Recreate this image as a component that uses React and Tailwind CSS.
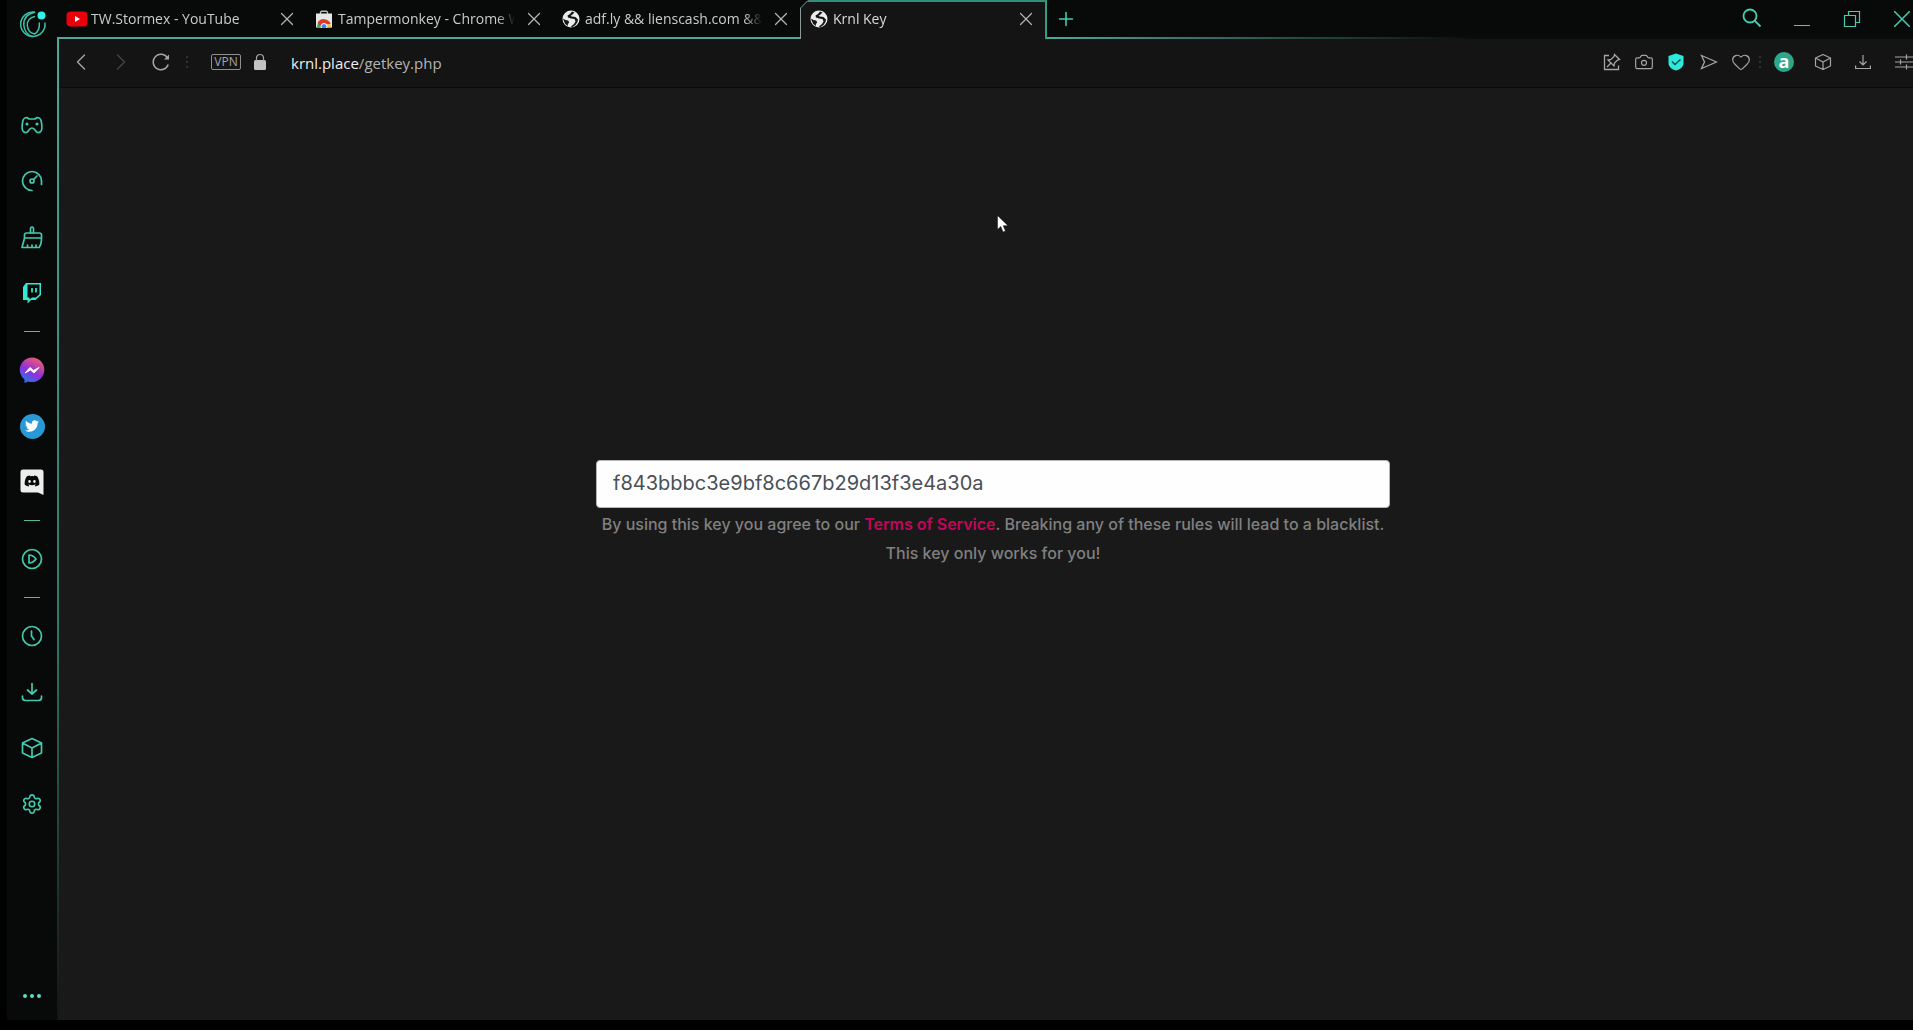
import { useState } from 'react';
import { Camera, ChevronLeft, ChevronRight, Heart, Plus, Settings, X } from 'lucide-react';
import { FaDiscord, FaTwitter } from 'react-icons/fa';

/* Favicons */
const YouTubeIcon = () => (
  <svg viewBox="0 0 22 16" className="w-[22px] h-4">
    <rect x="0.5" y="0.5" width="21" height="15" rx="4" fill="#e8000b" />
    <path d="M9 5v6l5-3z" fill="#fff" />
  </svg>
);

const StoreIcon = () => (
  <svg viewBox="0 0 18 18" className="size-[18px]">
    <path d="M5.500 4V2.500a1.200 1.200 0 0 1 1.200-1.200h4.600a1.200 1.200 0 0 1 1.200 1.200V4" fill="none" stroke="#b9bcbe" strokeWidth="1.400" />
    <rect x="1" y="3.500" width="16" height="14" fill="#e6e6e6" />
    <path d="M2 17.500a7 7 0 0 1 14 0z" fill="#f1c232" />
    <path d="M2 17.500a7 7 0 0 1 4-6.300l3 6.300z" fill="#3aa757" />
    <path d="M2.500 13a7.200 7.200 0 0 1 13.200 1H9a3 3 0 0 0-3 2z" fill="#dc3b2c" />
    <circle cx="9" cy="16.500" r="3" fill="#4285f4" stroke="#fff" strokeWidth="1" />
  </svg>
);

const GlobeIcon = () => (
  <svg viewBox="0 0 18 18" className="size-[18px]">
    <circle cx="9" cy="9" r="8.500" fill="#ececec" />
    <path d="M10 1.500 8 4 5.500 5.500l.5 2L9 8.500l3.500.5 1 2.500-1.500 2.500-2.500 2-.5 1h1.500l3-2 2-3 .5-2.500-2.500-2.500L10 6.500 8.500 6l2-1.500 2-2z" fill="#17181a" />
    <path d="M.8 8.500 3.500 10l2.700.6 1 1.900-1.400 1.600.2 2-2.800-2z" fill="#17181a" />
  </svg>
);

/* Sidebar drawings */
const stroke = { fill: 'none', stroke: 'currentColor', strokeWidth: 1.7, strokeLinecap: 'round', strokeLinejoin: 'round' };

const Logo = () => (
  <svg viewBox="0 0 28 28" className="size-7" fill="none" stroke="#3fbfa6" strokeWidth="1.500" strokeLinecap="round">
    <path d="M15.500 2.200A12.200 12.200 0 1 0 26 13" />
    <path d="M15.500 2.200C8 4 4.500 9 4.800 15S9 25.500 13.500 26.500" />
    <path d="M15.500 6.500C10 8 8 11.500 8.300 15.500s3 7.500 7.200 8.500c3.500-2 5.200-6 4.800-11" />
    <circle cx="22.500" cy="5.500" r="4" fill="#2ff3e4" stroke="none" />
  </svg>
);

const Gamepad = () => (
  <svg viewBox="0 0 22 20" className="w-[22px] h-5" {...stroke}>
    <path d="M6 2.500 8 4h6l2-1.500c2.500 0 3.800 1.500 4.300 4 .4 2 .8 4.500.5 7.500-.3 2.500-2.500 4.500-4.800 3.300-1.700-.9-2-4.300-5-4.300s-3.300 3.400-5 4.300C3.700 18.500 1.500 16.500 1.200 14c-.3-3 .1-5.500.5-7.500.5-2.500 1.800-4 4.300-4z" />
    <circle cx="6" cy="9" r=".7" fill="currentColor" />
    <circle cx="16" cy="9" r=".7" fill="currentColor" />
  </svg>
);

const Gauge = () => (
  <svg viewBox="0 0 22 22" className="size-[22px]" {...stroke}>
    <path d="M11 20.500A9.500 9.500 0 1 1 20.500 11v3.500" />
    <circle cx="11" cy="11" r="2" />
    <path d="m12.500 9.500 3.500-3.500" />
  </svg>
);

const Broom = () => (
  <svg viewBox="0 0 22 24" className="w-[22px] h-6" {...stroke}>
    <path d="M9.500 8V4q0-2 1.500-2t1.500 2v4" />
    <path d="M5.500 8h13q2 0 2 2v3h-17v-3q0-2 2-2zM3.500 13 1 22.500h17q2.500-3 2.500-9.500M6.500 22v-2M11 22v-2M15 22v-2" />
  </svg>
);

const Twitch = () => (
  <svg viewBox="0 0 20 22" className="w-5 h-[22px]">
    <path d="M4 1 1 5v13h4.500v3.500L9 18h4.500l5.500-5V1z" fill="#35e8d3" />
    <path d="M5.500 2.500h12v9.700L14 15.500h-4l-2.500 2v-2h-2z" fill="#090b0b" />
    <path d="M10 6v4.500M14 6v4.500" stroke="#35e8d3" strokeWidth="1.700" />
  </svg>
);

const Messenger = () => (
  <svg viewBox="0 0 26 26" className="size-[26px]">
    <defs>
      <linearGradient id="messenger" x1="0.2" y1="1" x2="0.75" y2="0">
        <stop offset="0" stopColor="#1583e8" />
        <stop offset="0.45" stopColor="#922ddd" />
        <stop offset="1" stopColor="#f0606a" />
      </linearGradient>
    </defs>
    <path d="M13 .5a12.300 12.300 0 0 1 0 24.600c-1.500 0-2.800-.2-4-.6L5.500 26v-3.500A12.300 12.300 0 0 1 13 .5z" fill="url(#messenger)" />
    <path d="m6 16 5-5.500 3.500 3 5.500-3-5 5.500-3.500-3z" fill="#fff" stroke="#fff" strokeWidth="1" strokeLinejoin="round" />
  </svg>
);

const Twitter = () => (
  <span className="flex size-[25px] items-center justify-center rounded-full bg-[#2898d6] text-white">
    <FaTwitter size={14} />
  </span>
);

const Discord = () => (
  <svg viewBox="0 0 24 26" className="w-6 h-[26px]">
    <path d="M3 .5h18A2.500 2.500 0 0 1 23.500 3v23L18 23.500H3A2.500 2.500 0 0 1 .5 21V3A2.500 2.500 0 0 1 3 .5z" fill="#ededed" />
    <FaDiscord x="4" y="4" size={16} color="#090b0b" />
  </svg>
);

const Player = () => (
  <svg viewBox="0 0 22 22" className="size-[22px]" {...stroke}>
    <circle cx="11" cy="11" r="9.500" />
    <path d="M8 7v8q4 0 7-4-3-4-7-4z" />
  </svg>
);

const History = () => (
  <svg viewBox="0 0 22 22" className="size-[22px]" {...stroke}>
    <circle cx="11" cy="11" r="9.500" />
    <path d="M10.500 6v5l2.500 3.500" />
  </svg>
);

const Downloads = () => (
  <svg viewBox="0 0 22 20" className="w-[22px] h-5" {...stroke}>
    <path d="M11 1.500v10M6.500 8l4.500 4L15.500 8M1.500 14v1.500q0 3 3 3h13q3 0 3-3V14" />
  </svg>
);

const Extensions = () => (
  <svg viewBox="0 0 22 22" className="size-[22px]" {...stroke}>
    <path d="M11 1.500 20.500 6v10L11 20.500 1.500 16V6zM1.500 6 11 11l9.500-5M11 11v9.500" />
  </svg>
);

const Preferences = () => <Settings size={22} strokeWidth={1.8} />;

const sidebar = [
  { name: 'GX Corner', icon: Gamepad },
  { name: 'GX Control', icon: Gauge },
  { name: 'GX Cleaner', icon: Broom },
  { name: 'Twitch', icon: Twitch },
  null,
  { name: 'Messenger', icon: Messenger },
  { name: 'Twitter', icon: Twitter },
  { name: 'Discord', icon: Discord },
  null,
  { name: 'Player', icon: Player },
  null,
  { name: 'History', icon: History },
  { name: 'Downloads', icon: Downloads },
  { name: 'Extensions', icon: Extensions },
  { name: 'Settings', icon: Preferences },
];

const tabs = [
  { title: 'TW.Stormex - YouTube', icon: YouTubeIcon },
  { title: 'Tampermonkey - Chrome W', icon: StoreIcon },
  { title: 'adf.ly && lienscash.com &&', icon: GlobeIcon },
  { title: 'Krnl Key', icon: GlobeIcon, active: true },
];

function Sidebar() {
  return (
    <nav className="flex w-[50px] shrink-0 flex-col items-center bg-[#080909] text-[#43c9ad]">
      <button aria-label="Menu" className="flex h-[97px] w-full justify-center pt-[10px] pl-0.5"><Logo /></button>
      {sidebar.map((item, i) =>
        item ? (
          <button key={i} aria-label={item.name} className="flex h-14 w-full items-center justify-center">
            <item.icon />
          </button>
        ) : (
          <div key={i} className="flex h-[21px] items-center">
            <div className="h-px w-4 bg-[#5cb5a0]"></div>
          </div>
        )
      )}
      <button aria-label="More" className="mt-auto flex h-12 w-full items-center justify-center gap-[3px]">
        <span className="size-1 rounded-full bg-[#5fdcc1]"></span>
        <span className="size-1 rounded-full bg-[#5fdcc1]"></span>
        <span className="size-1 rounded-full bg-[#5fdcc1]"></span>
      </button>
    </nav>
  );
}

function Tab({ title, icon: Icon, active }) {
  return (
    <div
      className={`relative flex w-[247px] shrink-0 items-center ${
        active
          ? 'border-t-2 border-r-2 border-l border-t-[#2f8f7c] border-r-[#349b87] border-l-[#8d9a97] bg-[#141414] pb-1 text-[#dadada]'
          : 'border-b-2 border-[#4fa897]'
      }`}
    >
      {/* Cut corner of the active tab */}
      {active && (
        <svg viewBox="0 0 9 9" className="absolute -top-0.5 -left-px size-[9px]">
          <path d="M0 0h9L0 9z" fill="#080909" />
          <path d="M.5 9V8L7.500 1H9" fill="none" stroke="#7d9d96" />
        </svg>
      )}
      <button className="flex min-w-0 flex-1 items-center gap-[3px] pl-[7px] text-left">
        <span className="flex w-[22px] shrink-0 justify-center"><Icon /></span>
        <span className="min-w-0 flex-1 whitespace-nowrap mask-r-from-90%">{title}</span>
      </button>
      <button aria-label="Close tab" className="flex w-[38px] shrink-0 justify-center text-[#b4b4b4]">
        <X size={22} strokeWidth={1.3} />
      </button>
    </div>
  );
}

function TabBar() {
  return (
    <div className="flex h-[39px] shrink-0 bg-[#080909] text-[14px] text-[#cbcbcb]">
      {tabs.map(tab => <Tab key={tab.title} {...tab} />)}
      <div className="flex flex-1 flex-col">
        <div className="flex flex-1 text-[#45cdb2]">
          <button aria-label="New tab" className="flex w-[38px] items-center justify-center"><Plus size={22} strokeWidth={1.7} /></button>
          <div className="ml-auto flex">
            <button aria-label="Search tabs" className="flex w-[50px] items-center justify-center pb-0.5">
              <svg viewBox="0 0 20 20" className="size-5" fill="none" stroke="currentColor" strokeWidth="1.800">
                <circle cx="8" cy="8" r="6.500" />
                <path d="m12.500 12.500 6 6" />
              </svg>
            </button>
            <button aria-label="Minimize" className="flex w-[50px] items-end justify-center pb-[11px]"><span className="h-px w-4 bg-current"></span></button>
            <button aria-label="Restore" className="flex w-[50px] items-center justify-center">
              <svg viewBox="0 0 18 18" className="size-[18px]" fill="none" stroke="currentColor" strokeWidth="1.200">
                <path d="M1.500 5.500h11v11h-11zM5.500 5.500v-4h11v11h-4" />
              </svg>
            </button>
            <button aria-label="Close" className="flex w-9 items-center justify-end pr-[3px]">
              <svg viewBox="0 0 16 16" className="size-4" stroke="currentColor" strokeWidth="1.500"><path d="m0 0 16 16M16 0 0 16" /></svg>
            </button>
          </div>
        </div>
        <div className="h-0.5 bg-linear-to-r from-[#4fa897] to-transparent to-50%"></div>
      </div>
    </div>
  );
}

const Dots = () => (
  <span className="flex w-[6px] flex-col items-center gap-[3px]">
    <span className="size-0.5 bg-[#303131]"></span>
    <span className="size-0.5 bg-[#303131]"></span>
    <span className="size-0.5 bg-[#303131]"></span>
  </span>
);

function AddressBar() {
  const [url] = useState('krnl.place/getkey.php');
  const [host, path] = url.split('/');

  return (
    <div className="flex h-[49px] shrink-0 items-center border-b border-[#0b0b0b] bg-[#141414] pb-0.5 text-[#a5a5a5]">
      <button aria-label="Back" className="flex w-10 justify-center pl-1"><ChevronLeft size={28} strokeWidth={1.2} /></button>
      <button aria-label="Forward" className="flex w-10 justify-center pl-1 text-[#454545]"><ChevronRight size={28} strokeWidth={1.2} /></button>
      <button aria-label="Reload" className="flex w-10 justify-center pl-1">
        <svg viewBox="0 0 18 18" className="size-[18px]" fill="none" stroke="currentColor" strokeWidth="1.500">
          <path d="M16.200 11.500A7.700 7.700 0 1 1 15.500 5" />
          <path d="M17 1.500V6.500h-5z" fill="currentColor" stroke="none" />
        </svg>
      </button>
      <span className="ml-[5px]"><Dots /></span>
      <button className="ml-[21px] flex h-4 w-[30px] items-center justify-center rounded-xs border border-[#8f8f8f] text-[12px] leading-none">VPN</button>
      <svg viewBox="0 0 14 18" className="ml-3 h-[18px] w-[14px]">
        <rect x="1" y="7" width="12" height="10" rx="1.500" fill="#c2c2c2" />
        <path d="M3.500 8V5a3.500 3.500 0 0 1 7 0v3" fill="none" stroke="#a5a5a5" strokeWidth="1.200" />
      </svg>
      <div className="ml-6 pt-0.5 text-[15px] text-[#b3b3b3]">
        <span className="text-[#eeeeee]">{host}</span>/{path}
      </div>

      <div className="ml-auto flex items-center">
        <button aria-label="Pinboard" className="flex w-[33px] justify-center">
          <svg viewBox="0 0 18 18" className="size-[18px]" fill="none" stroke="currentColor" strokeWidth="1.300">
            <path d="M6 2.500H1.500v14h14V12.500M11.500 1.500l5 5-2 .5-3 3-.5 3-6-6 3-.5 3-3zM8 10l-4 4" />
          </svg>
        </button>
        <button aria-label="Snapshot" className="flex w-8 justify-center"><Camera size={20} strokeWidth={1.4} /></button>
        <button aria-label="Ad blocker" className="flex w-8 justify-center">
          <svg viewBox="0 0 16 18" className="h-[18px] w-4">
            <path d="M8 .5 15.500 3v7c0 4-3.500 6.500-7.500 7.500C4 16.500.5 14 .5 10V3z" fill="#2ce9dc" />
            <path d="m4 8.500 3 3 5.500-5" fill="none" stroke="#12504b" strokeWidth="1.500" />
          </svg>
        </button>
        <button aria-label="My Flow" className="flex w-[33px] justify-center">
          <svg viewBox="0 0 18 16" className="h-4 w-[18px]" fill="none" stroke="currentColor" strokeWidth="1.300">
            <path d="M1.500 1.500 16.500 8l-15 6.500L4.500 8z" />
          </svg>
        </button>
        <button aria-label="Bookmark" className="flex w-8 justify-center"><Heart size={20} strokeWidth={1.4} /></button>
        <Dots />
        <button aria-label="Account" className="flex w-[42px] justify-center">
          <span className="flex size-5 items-center justify-center rounded-full bg-[#2da78a] pb-0.5 text-[18px] leading-none font-bold text-white">a</span>
        </button>
        <button aria-label="Extensions" className="flex w-9 justify-center">
          <svg viewBox="0 0 18 18" className="size-[18px]" fill="none" stroke="currentColor" strokeWidth="1.200" strokeLinejoin="round">
            <path d="M9 1.500 16.500 5v8L9 16.500 1.500 13V5zM1.500 5 9 9l7.500-4M9 9v7.500" />
          </svg>
        </button>
        <button aria-label="Downloads" className="flex w-11 justify-center">
          <svg viewBox="0 0 16 16" className="size-4" fill="none" stroke="currentColor" strokeWidth="1.200">
            <path d="M8 1v10M4.500 7.500 8 11l3.500-3.500M.6 11.500v3h14.800v-3" />
          </svg>
        </button>
        <button aria-label="Easy setup" className="flex w-7 justify-end">
          <svg viewBox="0 0 18 16" className="h-4 w-[18px]" fill="none" stroke="currentColor" strokeWidth="1.200">
            <path d="M0 3h18M0 8h18M0 13h18M11.500.5v5M5.500 5.500v5M11.500 10.500v5" />
          </svg>
        </button>
      </div>
    </div>
  );
}

function KeyPage() {
  return (
    <main className="relative flex flex-1 flex-col items-center justify-center bg-[#191919] pb-20 pl-[14px] font-['Inter',sans-serif]">
      <div className="w-full max-w-[794px]">
        <input
          type="text"
          readOnly
          aria-label="Key"
          defaultValue="f843bbbc3e9bf8c667b29d13f3e4a30a"
          className="block h-12 w-full rounded-sm border border-[#b5b5b5] bg-[#fefefe] px-4 pb-0.5 text-[20px] text-[#495057] outline-none"
        />
        <p className="pt-0.5 text-center text-[16px] leading-[29px] font-medium whitespace-nowrap text-[#808080]">
          By using this key you agree to our <a href="#tos" className="font-semibold text-[#c4055b]">Terms of Service</a>. Breaking any of these rules will lead to a blacklist.
          <br />
          This key only works for you!
        </p>
      </div>

      {/* Mouse pointer */}
      <svg viewBox="0 0 12 18" className="absolute top-[127px] left-[938px] h-[18px] w-3">
        <path d="M.5.500v14l3.300-3 2.200 5.500 2.500-1-2.300-5.300H11z" fill="#fff" stroke="#111" strokeWidth=".5" />
      </svg>
    </main>
  );
}

export default function App() {
  return (
    <div className="flex h-screen min-h-[920px] overflow-hidden bg-black pb-[10px] pl-[7px] font-['Open_Sans',sans-serif]">
      <Sidebar />
      <div className="flex w-0.5 shrink-0 flex-col bg-[#080909] pt-[37px]">
        <div className="flex-1 bg-linear-to-b from-[#4fa897] via-[#2c7a68] via-60% to-[#141414]"></div>
      </div>
      <div className="flex min-w-0 flex-1 flex-col">
        <TabBar />
        <AddressBar />
        <KeyPage />
      </div>
    </div>
  );
}
